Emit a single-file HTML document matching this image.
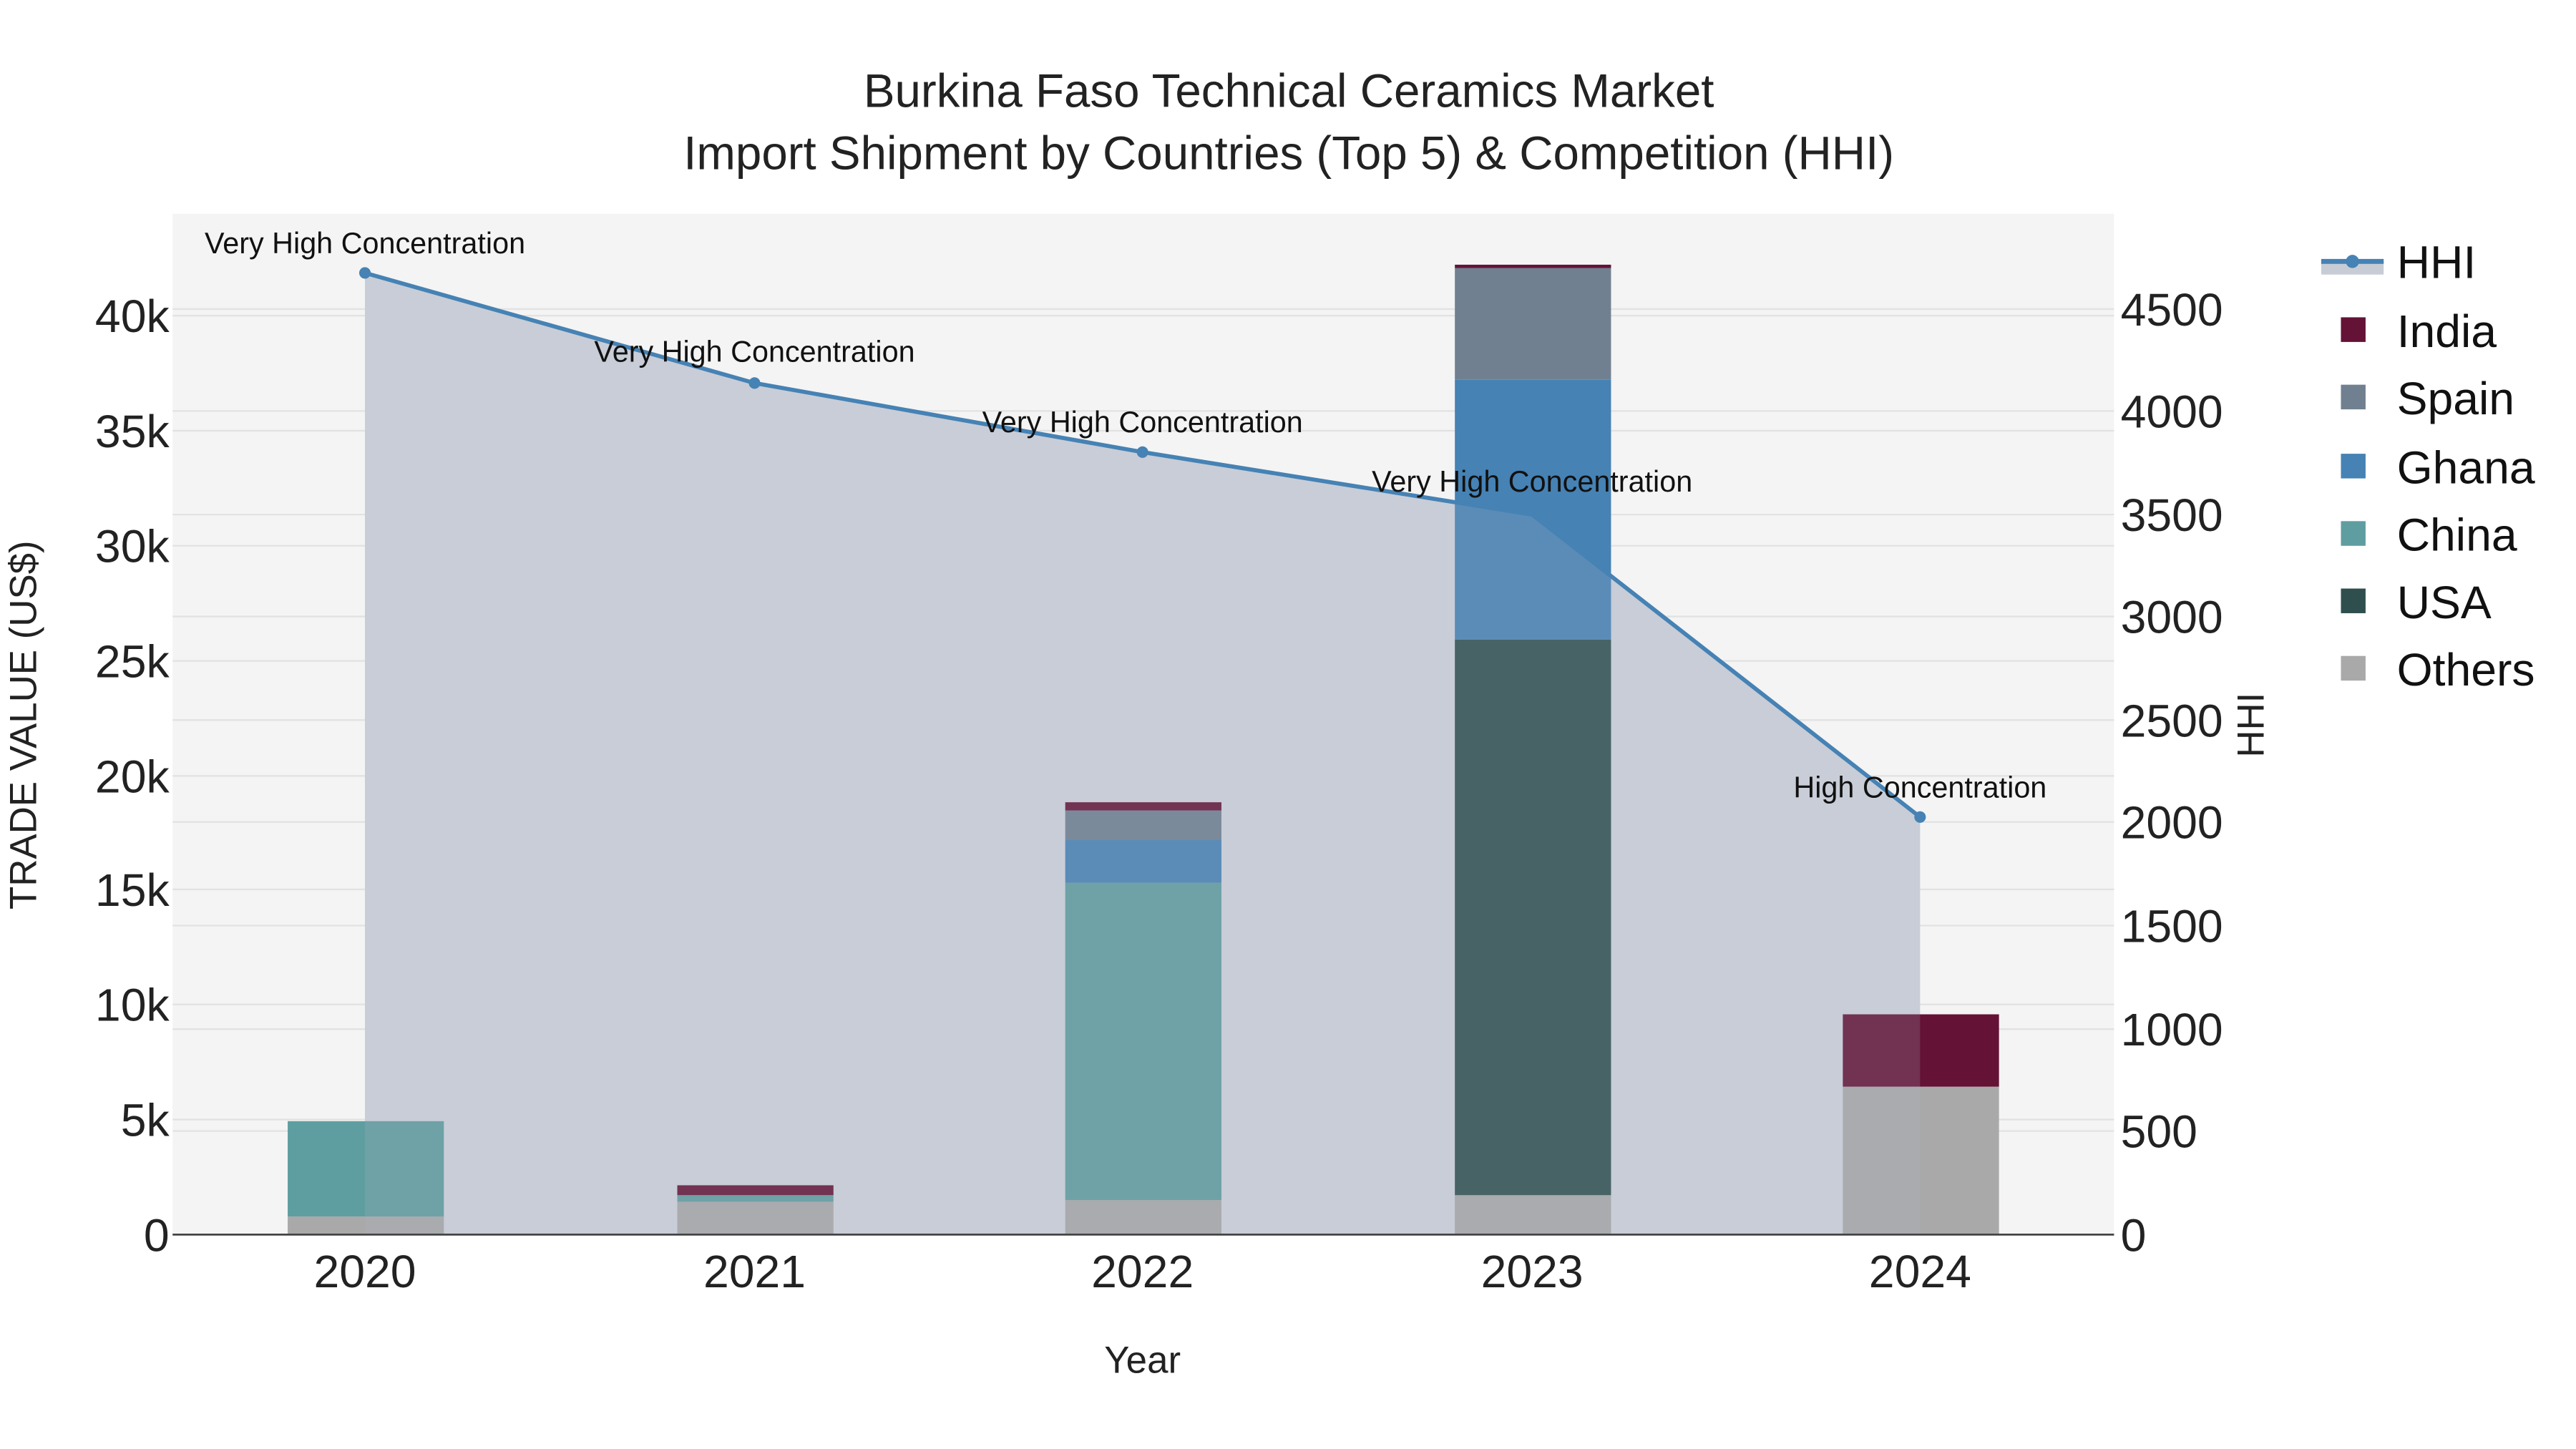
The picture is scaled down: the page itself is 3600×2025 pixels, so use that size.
<!DOCTYPE html>
<html><head><meta charset="utf-8"><style>html,body{margin:0;padding:0;background:#fff}svg{display:block}</style></head>
<body>
<svg width="3600" height="2025" viewBox="0 0 1567 881.4" xmlns="http://www.w3.org/2000/svg" font-family="Liberation Sans, sans-serif">
<rect width="1567" height="882" fill="#fff"/>
<rect x="105" y="130" width="1181" height="621" fill="#f4f4f4"/>
<g stroke="#e2e2e2" stroke-width="1">
<line x1="105" x2="1286" y1="681" y2="681"/><line x1="105" x2="1286" y1="611" y2="611"/><line x1="105" x2="1286" y1="541" y2="541"/><line x1="105" x2="1286" y1="472" y2="472"/><line x1="105" x2="1286" y1="402" y2="402"/><line x1="105" x2="1286" y1="332" y2="332"/><line x1="105" x2="1286" y1="262" y2="262"/><line x1="105" x2="1286" y1="192" y2="192"/>
<line x1="105" x2="1286" y1="688" y2="688"/><line x1="105" x2="1286" y1="626" y2="626"/><line x1="105" x2="1286" y1="563" y2="563"/><line x1="105" x2="1286" y1="500" y2="500"/><line x1="105" x2="1286" y1="438" y2="438"/><line x1="105" x2="1286" y1="375" y2="375"/><line x1="105" x2="1286" y1="313" y2="313"/><line x1="105" x2="1286" y1="250" y2="250"/><line x1="105" x2="1286" y1="188" y2="188"/>
</g>
<polygon points="222,166 459,233 695,275 932,313 1168,497 1168,751 222,751" fill="#d0d4dc"/>
<g>
<rect x="175" y="740" width="95" height="11" fill="#a9a9a9"/>
<rect x="175" y="682" width="95" height="58" fill="#5f9ea0"/>
<rect x="412" y="731" width="95" height="20" fill="#a9a9a9"/>
<rect x="412" y="727" width="95" height="4" fill="#5f9ea0"/>
<rect x="412" y="721" width="95" height="6" fill="#641236"/>
<rect x="648" y="730" width="95" height="21" fill="#a9a9a9"/>
<rect x="648" y="537" width="95" height="193" fill="#5f9ea0"/>
<rect x="648" y="511" width="95" height="26" fill="#4682b4"/>
<rect x="648" y="493" width="95" height="18" fill="#708090"/>
<rect x="648" y="488" width="95" height="5" fill="#641236"/>
<rect x="885" y="727" width="95" height="24" fill="#a9a9a9"/>
<rect x="885" y="389" width="95" height="338" fill="#2f4f4f"/>
<rect x="885" y="231" width="95" height="158" fill="#4682b4"/>
<rect x="885" y="163" width="95" height="68" fill="#708090"/>
<rect x="885" y="161" width="95" height="2" fill="#641236"/>
<rect x="1121" y="661" width="95" height="90" fill="#a9a9a9"/>
<rect x="1121" y="617" width="95" height="44" fill="#641236"/>
</g>
<polygon points="222,166 459,233 695,275 932,313 1168,497 1168,751 222,751" fill="rgba(170,180,195,0.2)"/>
<polyline points="222,166 459,233 695,275 932,313 1168,497" fill="none" stroke="#4682b4" stroke-width="2.5"/>
<g fill="#4682b4"><circle cx="222" cy="166" r="3.5"/><circle cx="459" cy="233" r="3.5"/><circle cx="695" cy="275" r="3.5"/><circle cx="1168" cy="497" r="3.5"/></g>
<line x1="105" x2="1286" y1="751" y2="751" stroke="#444" stroke-width="1.2"/>
<g font-size="18" fill="#111" text-anchor="middle">
<text x="222" y="154">Very High Concentration</text>
<text x="459" y="220">Very High Concentration</text>
<text x="695" y="263">Very High Concentration</text>
<text x="932" y="299">Very High Concentration</text>
<text x="1168" y="485">High Concentration</text>
</g>
<g font-size="28.5" fill="#222" text-anchor="middle">
<text x="784" y="65">Burkina Faso Technical Ceramics Market</text>
<text x="784" y="103">Import Shipment by Countries (Top 5) &amp; Competition (HHI)</text>
</g>
<g font-size="28" fill="#222" text-anchor="end">
<text x="103" y="761">0</text><text x="103" y="691">5k</text><text x="103" y="621">10k</text><text x="103" y="551">15k</text><text x="103" y="482">20k</text><text x="103" y="412">25k</text><text x="103" y="342">30k</text><text x="103" y="272">35k</text><text x="103" y="202">40k</text>
</g>
<g font-size="28" fill="#222" text-anchor="start">
<text x="1290" y="761">0</text><text x="1290" y="698">500</text><text x="1290" y="636">1000</text><text x="1290" y="573">1500</text><text x="1290" y="510">2000</text><text x="1290" y="448">2500</text><text x="1290" y="385">3000</text><text x="1290" y="323">3500</text><text x="1290" y="260">4000</text><text x="1290" y="198">4500</text>
</g>
<g font-size="28" fill="#222" text-anchor="middle">
<text x="222" y="783">2020</text><text x="459" y="783">2021</text><text x="695" y="783">2022</text><text x="932" y="783">2023</text><text x="1168" y="783">2024</text>
</g>
<text x="695" y="835" font-size="23" fill="#222" text-anchor="middle">Year</text>
<text transform="translate(22,441) rotate(-90)" font-size="23" fill="#222" text-anchor="middle">TRADE VALUE (US$)</text>
<text transform="translate(1377,441) rotate(-90)" font-size="23" fill="#222" text-anchor="middle">HHI</text>
<rect x="1412" y="159" width="38" height="8" fill="#c8cdd5"/>
<line x1="1412" x2="1450" y1="159" y2="159" stroke="#4682b4" stroke-width="3"/>
<circle cx="1431" cy="159" r="4" fill="#4682b4"/>
<rect x="1424" y="193" width="15" height="15" fill="#641236"/>
<rect x="1424" y="234" width="15" height="15" fill="#708090"/>
<rect x="1424" y="276" width="15" height="15" fill="#4682b4"/>
<rect x="1424" y="317" width="15" height="15" fill="#5f9ea0"/>
<rect x="1424" y="358" width="15" height="15" fill="#2f4f4f"/>
<rect x="1424" y="399" width="15" height="15" fill="#a9a9a9"/>
<g font-size="28" fill="#111">
<text x="1458" y="169">HHI</text><text x="1458" y="211">India</text><text x="1458" y="252">Spain</text><text x="1458" y="294">Ghana</text><text x="1458" y="335">China</text><text x="1458" y="376">USA</text><text x="1458" y="417">Others</text>
</g>
</svg>
</body></html>
